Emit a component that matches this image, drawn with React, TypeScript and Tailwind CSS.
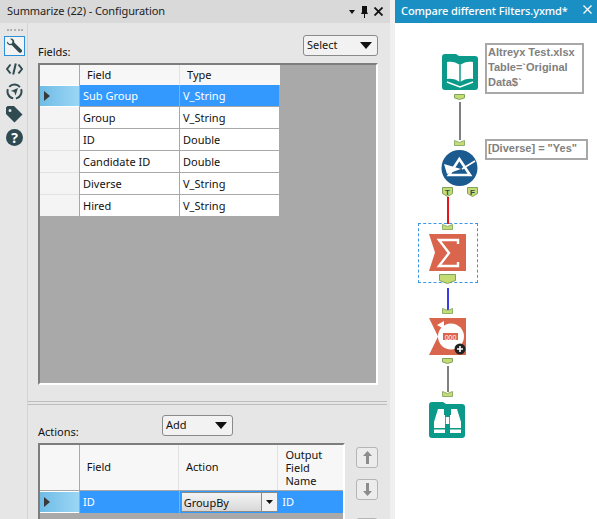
import { ReactNode } from "react";

const font = "font-['Noto_Sans','Open_Sans',sans-serif]";

const fieldRows = [
  ["Sub Group", "V_String"],
  ["Group", "V_String"],
  ["ID", "Double"],
  ["Candidate ID", "Double"],
  ["Diverse", "V_String"],
  ["Hired", "V_String"],
];

const Caret = () => (
  <svg width="6" height="10" viewBox="0 0 6 10">
    <path d="M0 0 L6 5 L0 10 Z" fill="#3a3a3a" />
  </svg>
);

const RowHeader = ({ active, last }: { active?: boolean; last?: boolean }) =>
  active ? (
    <div className="flex h-full w-[39px] shrink-0 items-center border-y border-white bg-gradient-to-r from-[#6fbce6] to-[#9bd6f5] pl-[4px]">
      <Caret />
    </div>
  ) : (
    <div className={`h-full w-[39px] shrink-0 bg-[#f4f4f4] ${last ? "border-b border-[#a8a8a8]" : "border-b border-[#e2e2e2]"}`} />
  );

const DropButton = ({ label, className }: { label: string; className: string }) => (
  <div className={`flex h-[21px] shrink-0 items-center justify-between rounded-[3px] border border-[#8a8a8a] bg-[#f2f2f2] pl-[3px] pr-[5px] text-[11px] text-[#111] ${className}`}>
    <span>{label}</span>
    <svg width="12" height="7" viewBox="0 0 12 7">
      <path d="M0 0 H12 L6 7 Z" fill="#111" />
    </svg>
  </div>
);

const MoveButton = ({ down, className = "" }: { down?: boolean; className?: string }) => (
  <div className={`flex h-[21px] w-[22px] shrink-0 items-center justify-center rounded-[3px] border border-[#b5b5b5] bg-[#ececec] ${className}`}>
    <svg width="9" height="13" viewBox="0 0 9 13" className={down ? "rotate-180" : ""}>
      <path d="M4.5 0 L9 5 H6 V13 H3 V5 H0 Z" fill="#8c8c8c" />
    </svg>
  </div>
);

const SideIcons = () => (
  <div className="flex w-[28px] shrink-0 flex-col items-center border-r border-[#d4d4d4] pl-[2px] pt-[6px]">
    <div className="mb-[5px] h-[2px] w-[16px] border-t-2 border-dotted border-[#b0b0b0]" />
    <div className="flex h-[20px] w-[21px] items-center justify-center border border-[#2b90d9] bg-[#f3f3f3]">
      <svg width="17" height="17" viewBox="0 0 17 17">
        <path d="M1 3.5 L3.5 6 L6 5.5 L6.5 3 L4 0.6 C6.5 -0.2 8.6 1.8 8.2 4.4 L15.6 11.8 C17 13.4 14.6 15.9 13 14.4 L5.6 7 C3 7.6 0.4 6 1 3.5 Z" fill="#2f4a50" />
      </svg>
    </div>
    <svg width="17" height="12" viewBox="0 0 17 12" className="mt-[7px]" fill="none" stroke="#2f4a50" strokeWidth="2">
      <path d="M4.5 1.5 L1 6 L4.5 10.5 M12.5 1.5 L16 6 L12.5 10.5 M9.8 0.5 L7.2 11.5" />
    </svg>
    <svg width="17" height="17" viewBox="0 0 17 17" className="mt-[8px]" fill="none" stroke="#2f4a50" strokeWidth="2">
      <circle cx="8.5" cy="8.5" r="7" strokeDasharray="12 2.66" transform="rotate(-20 8.5 8.5)" />
      <path d="M12 5 L9.5 12.5 L8.3 9 L4.8 8 Z" fill="#2f4a50" stroke="none" />
    </svg>
    <svg width="17" height="17" viewBox="0 0 17 17" className="mt-[6px]">
      <path d="M0 1.5 L1.5 0 H8 L16.5 8.5 L8.5 16.5 L0 8 Z M4 3 A1.5 1.5 0 1 0 4 6 A1.5 1.5 0 1 0 4 3 Z" fill="#2f4a50" fillRule="evenodd" />
    </svg>
    <div className="mt-[6px] flex h-[17px] w-[17px] items-center justify-center rounded-full bg-[#2f4a50] text-[14px] font-bold leading-none text-white">
      ?
    </div>
  </div>
);

const FieldsGrid = () => (
  <div className="h-[322px] w-[340px] shrink-0 border-2 border-[#7d7d7d] border-b-white border-r-white bg-[#a9a9a9]">
    <div className="w-[240px] bg-white text-[11px] text-[#111]">
      <div className="flex h-[20px]">
        <div className="w-[40px] border-r border-[#a8a8a8] bg-[#f7f7f7]" />
        <div className="w-[100px] border-r border-[#e2e2e2] bg-[#f7f7f7] pl-[7px] leading-[20px]">Field</div>
        <div className="w-[100px] bg-[#f7f7f7] pl-[7px] leading-[20px]">Type</div>
      </div>
      {fieldRows.map(([name, type], i) => (
        <div key={name} className="flex h-[22px]">
          <RowHeader active={i === 0} last={i === fieldRows.length - 1} />
          <div className={`w-[101px] border-x border-b border-[#a8a8a8] pl-[3px] leading-[21px] ${i === 0 ? "bg-[#3399ff] text-white" : ""}`}>{name}</div>
          <div className={`w-[100px] border-b border-r border-[#a8a8a8] pl-[3px] leading-[21px] ${i === 0 ? "bg-[#3399ff] text-white" : ""}`}>{type}</div>
        </div>
      ))}
    </div>
  </div>
);

const ActionsGrid = () => (
  <div className="h-[80px] w-[307px] shrink-0 border-2 border-[#7d7d7d] border-r-white bg-[#a9a9a9] text-[11px] text-[#111]">
    <div className="flex h-[45px] bg-[#f7f7f7]">
      <div className="w-[40px] border-r border-[#a8a8a8]" />
      <div className="flex w-[100px] items-center border-r border-[#e2e2e2] pl-[7px]">Field</div>
      <div className="flex w-[100px] items-center border-r border-[#e2e2e2] pl-[7px]">Action</div>
      <div className="flex w-[65px] items-center pl-[7px] leading-[13px]">
        <span>
          Output
          <br />
          Field
          <br />
          Name
        </span>
      </div>
    </div>
    <div className="flex h-[23px] border-t border-[#a8a8a8]">
      <RowHeader active />
      <div className="w-[101px] border-x border-[#a8a8a8] bg-[#3399ff] pl-[3px] leading-[22px] text-white">ID</div>
      <div className="flex w-[100px] bg-[#3399ff] p-[1px]">
        <div className="flex-1 border border-[#8a8a8a] bg-gradient-to-b from-[#f4f4f4] to-[#d8d8d8] pl-[2px] leading-[19px]">GroupBy</div>
        <div className="flex w-[16px] items-center justify-center border-y border-r border-[#8a8a8a] bg-[#f2f2f2]">
          <svg width="7" height="4" viewBox="0 0 7 4">
            <path d="M0 0 H7 L3.5 4 Z" fill="#111" />
          </svg>
        </div>
      </div>
      <div className="w-[64px] bg-[#3399ff] pl-[3px] leading-[22px] text-white">ID</div>
    </div>
  </div>
);

// input / output anchors on the canvas
const Anchor = ({ x, y, w = 11, h = 6, pointed, label }: { x: number; y: number; w?: number; h?: number; pointed?: boolean; label?: string }) => (
  <svg className="absolute" style={{ left: x, top: y }} width={w} height={h} viewBox={`0 0 ${w} ${h}`}>
    {pointed ? (
      <path d={`M0.5 0.5 H${w - 0.5} V${h * 0.65} L${w / 2} ${h - 0.5} L0.5 ${h * 0.65} Z`} fill="#c5dc74" stroke="#7fa35c" />
    ) : (
      <path d={`M0.5 0.5 L${w / 2} 2.5 L${w - 0.5} 0.5 V${h - 0.5} H0.5 Z`} fill="#c5dc74" stroke="#8fb06c" />
    )}
    {label && (
      <text x={w / 2} y={h - 2.5} textAnchor="middle" fontSize="8" fontWeight="700" fill="#2f4a50" fontFamily="Liberation Sans">
        {label}
      </text>
    )}
  </svg>
);

const Wire = ({ x, y, h, color }: { x: number; y: number; h: number; color: string }) => (
  <div className="absolute w-[2px]" style={{ left: x, top: y, height: h, background: color }} />
);

const Node = ({ x, y, children }: { x: number; y: number; children: ReactNode }) => (
  <svg className="absolute" style={{ left: x, top: y }} width="38" height="38" viewBox="0 0 38 38">
    {children}
  </svg>
);

const Note = ({ x, y, w, h, children }: { x: number; y: number; w: number; h: number; children: ReactNode }) => (
  <div
    className="absolute border-2 border-[#a8a8a8] bg-white pl-[1px] text-[11px] font-bold leading-[15px] text-[#808080] font-['Liberation_Sans',sans-serif]"
    style={{ left: x, top: y, width: w, height: h }}
  >
    {children}
  </div>
);

const folder = "M0 3 Q0 0 3 0 H14 L17 2 H33 Q36 2 36 5 V33 Q36 36 33 36 H3 Q0 36 0 33 Z";

const Canvas = () => (
  // offsets are relative to the canvas, which starts at x=395 y=23
  <div className="relative flex-1 bg-white">
    <Node x={47} y={31}>
      <path d={folder} fill="#0b9a8a" />
      <path d="M18 11 C14 8 9 7 5 8 V25 C9 24 14 25 18 28 C22 25 27 24 31 25 V8 C27 7 22 8 18 11 Z" fill="#fff" />
      <path d="M18 11 V28" stroke="#0b9a8a" strokeWidth="1.5" />
      <path d="M5 28 L18 33 L31 28" fill="none" stroke="#fff" strokeWidth="1.5" />
    </Node>
    <Anchor x={59} y={71} pointed />
    <Wire x={64} y={79} h={38} color="#808080" />
    <Anchor x={59} y={117} />
    <Note x={90} y={20} w={99} h={51}>
      Altreyx Test.xlsx
      <br />
      Table=`Original
      <br />
      Data$`
    </Note>
    <Note x={90} y={116} w={103} h={21}>
      [Diverse] = "Yes"
    </Note>

    <Node x={46} y={127}>
      <circle cx="18.5" cy="18" r="18" fill="#1a5a8f" />
      <path d="M18.3 9 L29 25 H8 Z" fill="none" stroke="#fff" strokeWidth="2.6" />
      <path d="M21 19 L34 11" stroke="#fff" strokeWidth="1.6" />
      <path d="M3 14 L20 19 L6 24 Z" fill="#fff" />
    </Node>
    <Anchor x={47} y={164} h={10} pointed label="T" />
    <Anchor x={72} y={164} h={10} pointed label="F" />
    <Wire x={52} y={174} h={27} color="#e8141c" />

    <div className="absolute h-[60px] w-[60px] border border-dashed border-[#3c96e6]" style={{ left: 23, top: 200 }} />
    <Anchor x={47} y={201} />
    <Node x={34} y={211}>
      <path d="M0 0 H37 V37 H0 L6 18.5 Z" fill="#d9654c" />
      <path d="M29 10 V6 H10 L20 19 L10 32 H29 V28" fill="none" stroke="#fff" strokeWidth="2.4" />
    </Node>
    <Anchor x={44} y={251} w={17} h={10} pointed />
    <Wire x={52} y={265} h={22} color="#3b3be8" />

    <Anchor x={47} y={285} />
    <Node x={34} y={295}>
      <path d="M0 0 H37 V37 H0 L9 18.5 Z" fill="#d9654c" />
      <circle cx="22" cy="18.5" r="13" fill="#fff" />
      <path d="M8 7 L15 3 V11 Z" fill="#fff" />
      <rect x="14" y="15" width="15" height="7" fill="#d9654c" />
      <text x="21.5" y="21.5" textAnchor="middle" fontSize="7" fill="#fff" fontFamily="Liberation Sans">000</text>
      <circle cx="31" cy="31" r="5.5" fill="#222" />
      <path d="M31 28 V34 M28 31 H34" stroke="#fff" strokeWidth="1.6" />
    </Node>
    <Anchor x={47} y={335} pointed />
    <Wire x={52} y={343} h={26} color="#808080" />
    <Anchor x={47} y={368} />

    <Node x={34} y={379}>
      <path d={folder} fill="#0b9a8a" />
      <path d="M9 7 H15 V13 H16 V26 H5 V20 Z M22 7 H28 L32 20 V26 H21 V13 H22 Z" fill="#fff" />
      <rect x="16.8" y="15" width="3.4" height="7" fill="#fff" />
      <path d="M5 27.5 H16 V31 H5 Z M21 27.5 H32 V31 H21 Z" fill="#fff" />
    </Node>
  </div>
);

export default function App() {
  return (
    <div className={`flex h-[519px] w-[597px] overflow-hidden bg-white ${font}`}>
      <div className="flex w-[390px] shrink-0 flex-col bg-[#e6e6e6]">
        <div className="flex h-[23px] shrink-0 items-center justify-between bg-[#d9d9d9] pl-[7px] pr-[7px] text-[11px] tracking-[-0.1px] text-[#222]">
          <span>Summarize (22) - Configuration</span>
          <div className="flex items-center gap-[6px]">
            <svg width="6" height="4" viewBox="0 0 6 4">
              <path d="M0 0 H6 L3 4 Z" fill="#111" />
            </svg>
            <svg width="7" height="12" viewBox="0 0 7 12">
              <path d="M1 0 H6 V6 L7 8 H4 V12 H3 V8 H0 L1 6 Z" fill="#111" />
            </svg>
            <svg width="9" height="9" viewBox="0 0 9 9" fill="none" stroke="#111" strokeWidth="1.8">
              <path d="M0.5 0.5 L8.5 8.5 M8.5 0.5 L0.5 8.5" />
            </svg>
          </div>
        </div>
        <div className="flex min-h-0 flex-1">
          <SideIcons />
          <div className="flex min-w-0 flex-1 flex-col pl-[10px] text-[11px] text-[#111]">
            <div className="flex h-[40px] w-[340px] shrink-0 items-end justify-between pb-[4px]">
              <span className="leading-[15px]">Fields:</span>
              <DropButton label="Select" className="mb-[3px] w-[75px]" />
            </div>
            <FieldsGrid />
            <div className="ml-[-10px] mt-[16px] h-[4px] w-[359px] shrink-0 border-y border-[#bdbdbd]" />
            <div className="flex h-[38px] shrink-0 items-end pb-[4px]">
              <span className="w-[124px] leading-[15px]">Actions:</span>
              <DropButton label="Add" className="mb-[3px] w-[71px]" />
            </div>
            <div className="flex shrink-0">
              <ActionsGrid />
              <div className="ml-[11px] flex flex-col gap-[11px] pt-[4px]">
                <MoveButton />
                <MoveButton down />
                <MoveButton className="mt-[7px]" />
              </div>
            </div>
          </div>
        </div>
      </div>
      <div className="w-[5px] shrink-0 bg-[#f0f0f0]" />
      <div className="flex min-w-0 flex-1 flex-col">
        <div className="flex h-[23px] shrink-0 items-center justify-between bg-[#1a8fc4] pl-[6px] pr-[5px] text-[11px] font-medium tracking-[-0.1px] text-white">
          <span>Compare different Filters.yxmd*</span>
          <svg width="9" height="9" viewBox="0 0 9 9" fill="none" stroke="#fff" strokeWidth="1.3" className="mb-[5px]">
            <path d="M0.5 0.5 L8.5 8.5 M8.5 0.5 L0.5 8.5" />
          </svg>
        </div>
        <Canvas />
      </div>
    </div>
  );
}
